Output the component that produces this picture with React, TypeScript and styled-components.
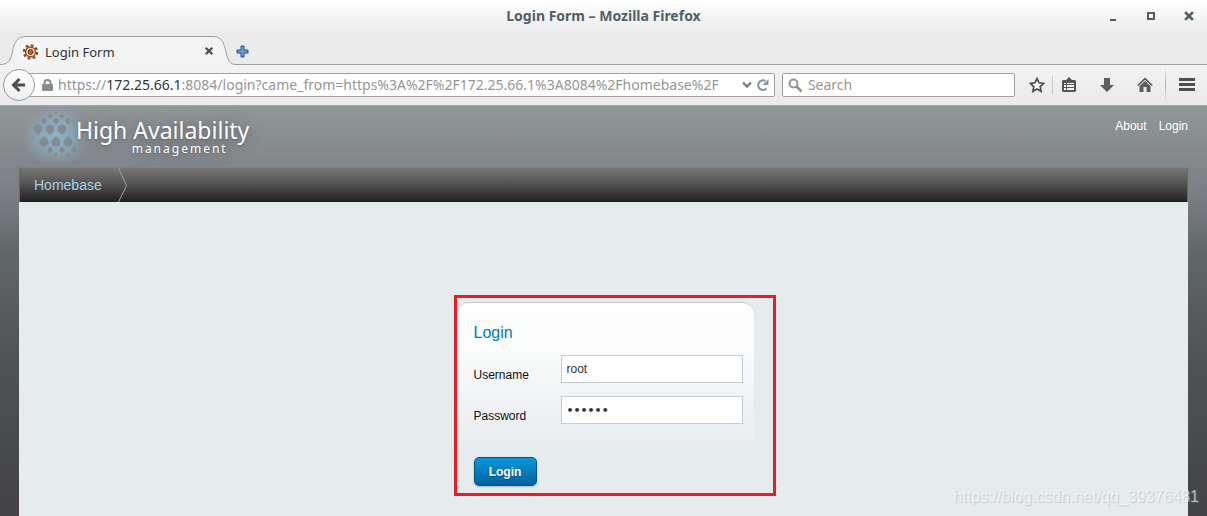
import React from 'react';
import styled, { createGlobalStyle } from 'styled-components';

const GlobalStyle = createGlobalStyle`
  *, *::before, *::after { box-sizing: border-box; }
  html, body { margin: 0; height: 100%; overflow: hidden; }
  #root { height: 100%; }
  button, input { font: inherit; margin: 0; }
  h1, h2, p { margin: 0; font-weight: normal; }
`;

const ui = `'Noto Sans', 'Open Sans', sans-serif`;
const site = `'Liberation Sans', Arial, sans-serif`;

const Window = styled.div`
  display: flex;
  flex-direction: column;
  height: 100vh;
  font-family: ${ui};
`;

const Chrome = styled.header`
  background: linear-gradient(#ffffff 0, #ebebeb 34px, #ebebeb 64px);
`;

const TitleBar = styled.div`
  display: grid;
  grid-template-columns: 1fr auto 1fr;
  align-items: center;
  height: 36px;
  padding-bottom: 4px;
`;

const WindowTitle = styled.p`
  grid-column: 2;
  font-size: 14px;
  line-height: 20px;
  font-weight: 700;
  color: #4f6069;
`;

const WindowButtons = styled.div`
  display: flex;
  justify-content: flex-end;
  gap: 22px;
  padding-right: 10px;
`;

const IconButton = styled.button<{ $size?: number }>`
  position: relative;
  flex: none;
  display: grid;
  place-items: center;
  width: ${p => p.$size ?? 16}px;
  height: ${p => p.$size ?? 16}px;
  padding: 0;
  border: 0;
  background: none;
`;

const TabStrip = styled.div`
  display: flex;
  height: 29px;
`;

const Tab = styled.div`
  position: relative;
  flex: none;
  display: flex;
  align-items: center;
  width: 236px;
  padding: 2px 19px 0 22px;
  font-size: 13px;
  line-height: 20px;
  color: #2e3436;
`;

const TabShape = styled.svg`
  position: absolute;
  inset: 0;
`;

const TabTitle = styled.span`
  position: relative;
  flex: 1;
  padding-left: 6px;
`;

const TabIcon = styled.svg`
  position: relative;
`;

const StripRest = styled.div`
  flex: 1;
  padding-top: 9px;
  border-bottom: 1px solid #a0a0a0;
`;

const Toolbar = styled.div`
  display: flex;
  align-items: center;
  height: 41px;
  padding: 0 12px 0 3px;
  background: linear-gradient(#f3f3f3, #eaeaea);
  border-bottom: 1px solid #a3a5a7;
`;

const BackButton = styled.button`
  position: relative;
  flex: none;
  display: grid;
  place-items: center;
  width: 32px;
  height: 32px;
  margin-right: -9px;
  padding: 0;
  border: 1px solid #8d9baa;
  border-radius: 50%;
  background: linear-gradient(#ffffff, #f0f0f0);
`;

const Fields = styled.div`
  flex: 1;
  min-width: 0;
  display: flex;
  gap: 7px;
`;

const Field = styled.div<{ $grow: number; $left: number }>`
  flex: ${p => p.$grow} 1 0;
  min-width: 0;
  display: flex;
  align-items: center;
  height: 24px;
  padding-left: ${p => p.$left}px;
  border: 1px solid #a0a0a0;
  border-radius: 2px;
  background: #ffffff;
  font-size: 14px;
  line-height: 20px;
  color: #949696;
`;

const Address = styled.div`
  flex: 1;
  min-width: 0;
  margin-right: 6px;
  padding-left: 5px;
  overflow: hidden;
  white-space: nowrap;
  b { font-weight: 400; color: #2e3436; }
`;

const SearchInput = styled.input`
  flex: 1;
  min-width: 0;
  padding: 0 0 0 5px;
  border: 0;
  outline: 0;
  background: none;
  color: #2e3436;
  &::placeholder { color: #949696; opacity: 1; }
`;

const Tools = styled.div`
  display: flex;
  align-items: center;
  padding-left: 14px;
`;

const Separator = styled.span<{ $tall?: boolean }>`
  width: 1px;
  height: ${p => (p.$tall ? 34 : 18)}px;
  margin: 0 ${p => (p.$tall ? '13px 0 12px' : '8px 0 7px')};
  background: ${p => (p.$tall ? 'linear-gradient(#eeeeee, #a9b4c0, #eeeeee)' : '#c4c7cb')};
`;

const ToolGroup = styled.div`
  display: flex;
  gap: 22px;
`;

const Page = styled.main`
  flex: 1;
  display: flex;
  flex-direction: column;
  padding: 0 19px;
  background: linear-gradient(#92979a 0, #7a7e82 90px, #62676a 145px, #505356 250px, #434346 100%);
  font-family: ${site};
`;

const PageHeader = styled.div`
  display: flex;
  justify-content: space-between;
  height: 61px;
`;

const Brand = styled.a`
  display: flex;
  color: #ffffff;
  text-decoration: none;
`;

const BrandText = styled.span`
  display: flex;
  flex-direction: column;
  align-items: center;
  padding-top: 12px;
  font-family: ${ui};
  text-shadow: 0 0 14px #5d6164, 0 1px 2px #6a6d70;
`;

const BrandName = styled.span`
  font-size: 23px;
  line-height: 25px;
`;

const BrandSub = styled.span`
  padding-left: 34px;
  font-size: 12px;
  line-height: 12px;
  letter-spacing: 2px;
`;

const Emblem = styled.svg`
  flex: none;
  margin-right: -14px;
`;

const UserLinks = styled.nav`
  display: flex;
  gap: 12px;
  padding-top: 13px;
  a {
    font-size: 12px;
    line-height: 14px;
    color: #ffffff;
    text-decoration: none;
  }
`;

const MainNav = styled.nav`
  display: flex;
  height: 35px;
  border: 1px solid #66686b;
  border-top-color: #7f8081;
  border-bottom: 0;
  background: linear-gradient(#777777, #505050 50%, #1f1f1f);
  a {
    padding: 0 16px 0 14px;
    font-size: 14px;
    line-height: 34px;
    color: #a8cfe0;
    text-decoration: none;
  }
`;

const Content = styled.section`
  flex: 1;
  display: flex;
  flex-direction: column;
  align-items: center;
  padding-top: 93px;
  background: #e6ebee;
`;

const Highlight = styled.div`
  width: 322px;
  margin-left: 22px;
  padding: 4px 19px 7px 0;
  border: 3px solid #ed1c24;
`;

const Card = styled.form`
  padding: 20px 11px 0 17px;
  border-top: 1px solid #c5cbd0;
  border-radius: 12px 12px 0 0;
  background: linear-gradient(#ffffff, #fafbfb 25%, #e6ebee 82%);
`;

const CardTitle = styled.h1`
  padding-bottom: 12px;
  font-size: 16px;
  line-height: 20px;
  color: #0079bc;
`;

const Row = styled.div`
  display: flex;
  margin-bottom: 13px;
  label {
    flex: 1;
    padding-top: 12px;
    font-size: 12px;
    line-height: 16px;
    color: #111111;
  }
  input {
    width: 182px;
    height: 28px;
    padding: 0 5px;
    border: 1px solid #c5cbd0;
    border-radius: 0;
    outline: 0;
    background: #ffffff;
    font-size: 12px;
    color: #333333;
  }
  input[type='password'] {
    font-family: 'DejaVu Sans', sans-serif;
    font-size: 11px;
    font-weight: 700;
  }
`;

const Submit = styled.button`
  display: block;
  width: 63px;
  height: 29px;
  margin-top: 33px;
  padding: 0;
  border: 1px solid #00568c;
  border-radius: 5px;
  background: linear-gradient(#0c97dc, #00629f);
  box-shadow: 0 1px 2px #b5bbc0;
  font-size: 12px;
  font-weight: 700;
  color: #ffffff;
  text-shadow: 0 1px 1px #004a78;
`;

const Watermark = styled.p`
  position: absolute;
  right: 8px;
  bottom: 9px;
  font-family: ${site};
  font-size: 16px;
  line-height: 20px;
  color: rgba(255, 255, 255, 0.6);
  text-shadow: 1px 1px 1px rgba(140, 140, 140, 0.35);
`;

/* x, y, radius and vertical direction of each drop in the emblem */
const drops: [number, number, number, number][] = [
  [37, 7, 1, 1], [31, 10, 2, 1], [43, 10, 2, 1],
  [25, 15, 3, 1], [37, 15, 3, 1], [49, 15, 3, 1],
  [19, 23, 5, 1], [31, 23, 5, 1], [43, 23, 5, 1],
  [25, 36, 5, -1], [37, 36, 5, -1], [49, 36, 5, -1],
  [31, 44, 3, -1], [43, 44, 3, -1], [55, 44, 3, -1],
  [37, 49, 2, -1], [49, 49, 2, -1],
];

export default function App() {
  return (
    <Window>
      <GlobalStyle />
      <Chrome>
        <TitleBar>
          <WindowTitle>Login Form – Mozilla Firefox</WindowTitle>
          <WindowButtons>
            <IconButton aria-label="Minimize">
              <svg width="16" height="16"><path d="M5 11h6v2H5z" fill="#4f6069" /></svg>
            </IconButton>
            <IconButton aria-label="Maximize">
              <svg width="16" height="16"><path d="M5 5h6v6H5z" fill="none" stroke="#4f6069" strokeWidth="2" /></svg>
            </IconButton>
            <IconButton aria-label="Close">
              <svg width="16" height="16"><path d="M5 5l6 6M11 5l-6 6" stroke="#4f6069" strokeWidth="2.6" strokeLinecap="square" /></svg>
            </IconButton>
          </WindowButtons>
        </TitleBar>
        <TabStrip>
          <Tab>
            <TabShape width="236" height="29" viewBox="0 0 236 29">
              <path d="M0 28.5C7 28.5 10 26 12 18C14 6 17 .5 26 .5H213C221 .5 224 6 226 16C228 25 230 28.5 236 28.5V29H0z" fill="#f3f3f3" />
              <path d="M0 28.5C7 28.5 10 26 12 18C14 6 17 .5 26 .5H213C221 .5 224 6 226 16C228 25 230 28.5 236 28.5" fill="none" stroke="#a0a0a0" />
            </TabShape>
            <TabIcon width="17" height="16" viewBox="0 0 17 16">
              <rect width="17" height="16" fill="#fdfdfd" />
              <circle cx="8.5" cy="8" r="6.6" fill="none" stroke="#8b4a2b" strokeWidth="2.4" strokeDasharray="2.9 2.28" />
              <circle cx="8.5" cy="8" r="4.9" fill="#f4ebe4" stroke="#9a5632" strokeWidth="1.6" />
              <circle cx="8.5" cy="8" r="2.5" fill="#e0581e" stroke="#7a2f10" />
            </TabIcon>
            <TabTitle>Login Form</TabTitle>
            <IconButton aria-label="Close tab">
              <svg width="16" height="16"><path d="M5.5 4.5l5 5M10.5 4.5l-5 5" stroke="#4a5054" strokeWidth="2.2" strokeLinecap="square" /></svg>
            </IconButton>
          </Tab>
          <StripRest>
            <IconButton aria-label="New tab" $size={13}>
              <svg width="13" height="13"><path d="M5 1h3v4h4v3H8v4H5V8H1V5h4z" fill="#6f9bd0" stroke="#27518c" strokeLinejoin="round" /></svg>
            </IconButton>
          </StripRest>
        </TabStrip>
        <Toolbar>
          <BackButton aria-label="Back">
            <svg width="16" height="16"><path d="M8.5 2L2.5 8l6 6M3 8h11" fill="none" stroke="#4c4e4e" strokeWidth="3" /></svg>
          </BackButton>
          <Fields>
            <Field $grow={751} $left={15}>
              <svg width="11" height="12"><path d="M2.5 6V4a3 3 0 0 1 6 0v2" fill="none" stroke="#8a8a8a" strokeWidth="2" /><rect y="5" width="11" height="7" rx="1" fill="#8a8a8a" /></svg>
              <Address>https://<b>172.25.66.1</b>:8084/login?came_from=https%3A%2F%2F172.25.66.1%3A8084%2Fhomebase%2F</Address>
              <svg width="10" height="8"><path d="M1 1.5l4 4 4-4" fill="none" stroke="#7c7e7c" strokeWidth="2.4" /></svg>
              <IconButton aria-label="Reload" $size={22}>
                <svg width="14" height="14"><path d="M10.5 10.5A4.8 4.8 0 1 1 9.5 3" fill="none" stroke="#8396ab" strokeWidth="2.2" /><path d="M12.5 1v6h-6z" fill="#8396ab" /></svg>
              </IconButton>
            </Field>
            <Field $grow={232} $left={5}>
              <svg width="15" height="15"><circle cx="5.5" cy="5.5" r="4" fill="none" stroke="#949494" strokeWidth="2" /><path d="M8.5 8.5l5 5" stroke="#949494" strokeWidth="2.6" /></svg>
              <SearchInput aria-label="Search" placeholder="Search" />
            </Field>
          </Fields>
          <Tools>
            <IconButton aria-label="Bookmark this page">
              <svg width="16" height="16"><path d="M8 1.5l2 4.3 4.700.6-3.500 3.200.9 4.700L8 12l-4.100 2.300.9-4.700L1.300 6.400 6 5.800z" fill="#f8f8f8" stroke="#4e4e4e" strokeWidth="1.7" /></svg>
            </IconButton>
            <Separator />
            <ToolGroup>
              <IconButton aria-label="Bookmarks">
                <svg width="16" height="16"><path d="M2 3h3l3-3 3 3h3l1 1v10l-1 1H2l-1-1V4z" fill="#555" /><path d="M3 6h2v1H3zM6 6h7v1H6zM3 8h2v2H3zM6 8h7v2H6zM3 11h2v2H3zM6 11h7v2H6z" fill="#f4f4f4" /></svg>
              </IconButton>
              <IconButton aria-label="Downloads">
                <svg width="16" height="16"><path d="M5 1h6v7h4l-7 7-7-7h4z" fill="#5e5e5e" /></svg>
              </IconButton>
              <IconButton aria-label="Home">
                <svg width="16" height="16"><path d="M.8 8.5L8 1.7l7.2 6.8" fill="none" stroke="#555" strokeWidth="1.6" /><path d="M8 4l5.5 5v6H9.500v-5h-3v5h-4V9z" fill="#5e5e5e" /></svg>
              </IconButton>
            </ToolGroup>
            <Separator $tall />
            <IconButton aria-label="Menu">
              <svg width="16" height="16"><path d="M0 2.5h16M0 7.5h16M0 12.5h16" stroke="#4e4e4e" strokeWidth="3" /></svg>
            </IconButton>
          </Tools>
        </Toolbar>
      </Chrome>
      <Page>
        <PageHeader>
          <Brand href="#">
            <Emblem width="71" height="61" viewBox="0 0 71 61">
              <defs>
                <radialGradient id="glow">
                  <stop offset="0" stopColor="#87b3c9" />
                  <stop offset="0.5" stopColor="#87b0c4" stopOpacity="0.75" />
                  <stop offset="1" stopColor="#87a4b4" stopOpacity="0" />
                </radialGradient>
              </defs>
              <ellipse cx="37" cy="30" rx="34" ry="31" fill="url(#glow)" />
              {drops.map(([x, y, r, s]) => (
                <path key={`${x}-${y}`} transform={`translate(${x} ${y}) scale(${r} ${r * s})`} fill="#868b8f" d="M-.9-.1A.9.8 0 0 1 .9-.1C.9.5.4.7 0 1.2C-.4.7-.9.5-.9-.1z" />
              ))}
            </Emblem>
            <BrandText>
              <BrandName>High Availability</BrandName>
              <BrandSub>management</BrandSub>
            </BrandText>
          </Brand>
          <UserLinks>
            <a href="#">About</a>
            <a href="#">Login</a>
          </UserLinks>
        </PageHeader>
        <MainNav>
          <a href="#">Homebase</a>
          <svg width="10" height="34"><path d="M.5 0l8 17.5L.5 34" fill="none" stroke="#a0a0a0" /></svg>
        </MainNav>
        <Content>
          <Highlight>
            <Card onSubmit={e => e.preventDefault()}>
              <CardTitle>Login</CardTitle>
              <Row>
                <label htmlFor="username">Username</label>
                <input id="username" type="text" defaultValue="root" />
              </Row>
              <Row>
                <label htmlFor="password">Password</label>
                <input id="password" type="password" defaultValue="redhat" />
              </Row>
              <Submit type="submit">Login</Submit>
            </Card>
          </Highlight>
        </Content>
      </Page>
      <Watermark>https://blog.csdn.net/qq_39376481</Watermark>
    </Window>
  );
}
